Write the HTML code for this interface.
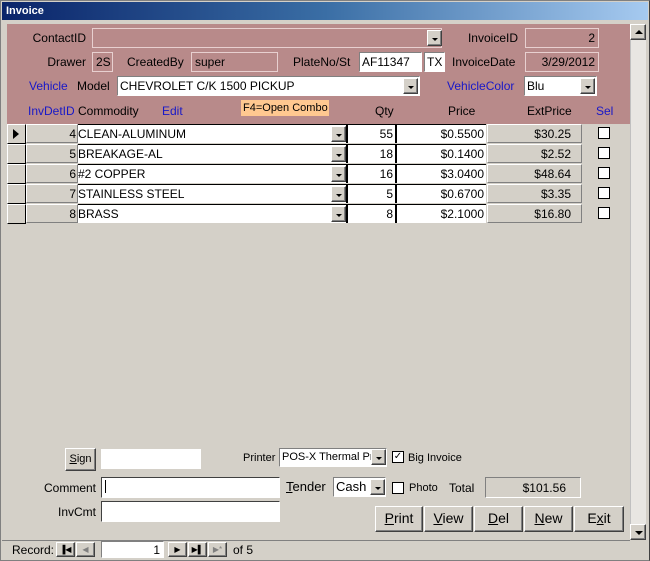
<!DOCTYPE html>
<html><head><meta charset="utf-8"><style>
*{box-sizing:border-box;margin:0;padding:0}
body{width:650px;height:561px;overflow:hidden;background:#d4d0c8;font-family:"Liberation Sans",Tahoma,sans-serif;font-size:12px;color:#000;position:relative}
.a{position:absolute}
.win{left:0;top:0;width:650px;height:561px;border:1px solid #808080;border-right-color:#404040;background:#d4d0c8}
.title{left:2px;top:2px;width:646px;height:18px;background:linear-gradient(90deg,#0a246a,#3a6ea5 50%,#a6caf0);color:#fff;font-weight:bold;font-size:11px;padding:3px 0 0 4px}
.hdr{left:7px;top:24px;width:623px;height:100px;background:#b88a8a}
.lbl{white-space:nowrap;line-height:14px}
.r{text-align:right}
.blue{color:#1818c8}
.pbox{border:1px solid #e8d0d0;background:#b88a8a;padding:2px 3px;line-height:14px;white-space:nowrap;overflow:hidden}
.wbox{background:#fff;border:1px solid;border-color:#808080 #fff #fff #808080;padding:2px 2px;line-height:14px;white-space:nowrap;overflow:hidden}
.btn{background:#d4d0c8;border:1px solid;border-color:#fff #404040 #404040 #fff;box-shadow:inset -1px -1px 0 #808080}
.dd{width:15px;height:16px}
.dd:after{content:"";position:absolute;left:4px;top:7px;border:3px solid transparent;border-top:3px solid #000;border-bottom:0}
.cell{height:19px;line-height:17px;padding:1px 2px;white-space:nowrap;overflow:hidden}
.g{background:#d4d0c8;border:1px solid;border-color:#fff #808080 #808080 #fff}
.w{background:#fff;border-right:2px solid #000}
.cb{width:12px;height:12px;background:#fff;border:1px solid #000}
.sb{left:630px;top:24px;width:16px;height:516px;background:#e8e6e2;border-left:1px solid #c0c0c0}
.bb{font-size:14px;text-align:center;line-height:22px}
u{text-decoration:underline}
</style></head><body>
<div class="a win"></div>
<div class="a title">Invoice</div>
<div class="a hdr"></div>
<!-- row1 -->
<div class="a lbl r" style="left:20px;top:31px;width:66px">ContactID</div>
<div class="a pbox" style="left:92px;top:28px;width:350px;height:20px"></div>
<div class="a btn dd" style="left:427px;top:30px"></div>
<div class="a lbl r" style="left:450px;top:31px;width:68px">InvoiceID</div>
<div class="a pbox r" style="left:525px;top:28px;width:74px;height:20px">2</div>
<!-- row2 -->
<div class="a lbl r" style="left:30px;top:55px;width:56px">Drawer</div>
<div class="a pbox" style="left:92px;top:52px;width:21px;height:20px">2S</div>
<div class="a lbl" style="left:127px;top:55px">CreatedBy</div>
<div class="a pbox" style="left:191px;top:52px;width:87px;height:20px">super</div>
<div class="a lbl" style="left:293px;top:55px">PlateNo/St</div>
<div class="a wbox" style="left:359px;top:52px;width:63px;height:20px">AF11347</div>
<div class="a wbox" style="left:424px;top:52px;width:21px;height:20px">TX</div>
<div class="a lbl" style="left:452px;top:55px">InvoiceDate</div>
<div class="a pbox r" style="left:525px;top:52px;width:74px;height:20px">3/29/2012</div>
<!-- row3 -->
<div class="a lbl blue" style="left:29px;top:79px">Vehicle</div>
<div class="a lbl" style="left:77px;top:79px">Model</div>
<div class="a wbox" style="left:117px;top:76px;width:303px;height:20px">CHEVROLET C/K 1500 PICKUP</div>
<div class="a btn dd" style="left:403px;top:78px"></div>
<div class="a lbl blue" style="left:447px;top:79px">VehicleColor</div>
<div class="a wbox" style="left:524px;top:76px;width:73px;height:20px">Blu</div>
<div class="a btn dd" style="left:580px;top:78px"></div>
<!-- col labels -->
<div class="a lbl blue" style="left:28px;top:104px">InvDetID</div>
<div class="a lbl" style="left:78px;top:104px">Commodity</div>
<div class="a lbl blue" style="left:162px;top:104px">Edit</div>
<div class="a lbl" style="left:241px;top:100px;width:88px;height:16px;background:#ffc890;padding:1px 2px;font-size:11px">F4=Open Combo</div>
<div class="a lbl" style="left:375px;top:104px">Qty</div>
<div class="a lbl" style="left:448px;top:104px">Price</div>
<div class="a lbl" style="left:527px;top:104px">ExtPrice</div>
<div class="a lbl blue" style="left:596px;top:104px">Sel</div>
<!-- rows -->
<div id="rows"></div>
<script>
var d=[["4","CLEAN-ALUMINUM","55","$0.5500","$30.25"],["5","BREAKAGE-AL","18","$0.1400","$2.52"],["6"," #2 COPPER","16","$3.0400","$48.64"],["7","STAINLESS STEEL","5","$0.6700","$3.35"],["8","BRASS","8","$2.1000","$16.80"]];
var h="";
for(var i=0;i<5;i++){var y=124+i*20,r=d[i];
h+='<div class="a g" style="left:7px;top:'+y+'px;width:19px;height:20px;border-color:#fff #000 #000 #fff"></div>';
if(i==0)h+='<div class="a" style="left:13px;top:'+(y+5)+'px;border:5px solid transparent;border-left:6px solid #000;border-right:0"></div>';
h+='<div class="a cell g r" style="left:26px;top:'+y+'px;width:52px;padding-right:1px">'+r[0]+'</div>';
h+='<div class="a cell w" style="left:78px;top:'+y+'px;width:270px;border-top:1px solid #000;padding-left:0">'+r[1]+'</div>';
h+='<div class="a btn dd" style="left:331px;top:'+(y+2)+'px"></div>';
h+='<div class="a cell w r" style="left:348px;top:'+y+'px;width:49px;border-top:1px solid #000">'+r[2]+'</div>';
h+='<div class="a cell r" style="left:397px;top:'+y+'px;width:89px;background:#fff;border-top:1px solid #000">'+r[3]+'</div>';
h+='<div class="a cell g r" style="left:487px;top:'+y+'px;width:95px;padding-right:10px">'+r[4]+'</div>';
h+='<div class="a cb" style="left:598px;top:'+(y+3)+'px"></div>';}
document.getElementById("rows").innerHTML=h;
</script>
<!-- scrollbar -->
<div class="a sb"></div>
<div class="a btn" style="left:630px;top:24px;width:16px;height:16px"><div class="a" style="left:4px;top:5px;border:4px solid transparent;border-bottom:4px solid #000;border-top:0"></div></div>
<div class="a btn" style="left:630px;top:524px;width:16px;height:16px"><div class="a" style="left:4px;top:6px;border:4px solid transparent;border-top:4px solid #000;border-bottom:0"></div></div>
<!-- bottom -->
<div class="a btn" style="left:65px;top:448px;width:31px;height:23px;text-align:center;line-height:20px;font-size:11px"><u>S</u>ign</div>
<div class="a" style="left:101px;top:449px;width:100px;height:20px;background:#fff"></div>
<div class="a lbl" style="left:243px;top:451px;font-size:11px">Printer</div>
<div class="a wbox" style="left:279px;top:448px;width:108px;height:19px;padding:1px 2px;font-size:11px">POS-X Thermal Pri</div>
<div class="a btn dd" style="left:371px;top:449px"></div>
<div class="a cb" style="left:392px;top:451px;font-size:10px;line-height:9px;text-align:center">✓</div>
<div class="a lbl" style="left:408px;top:451px;font-size:11px">Big Invoice</div>
<div class="a lbl r" style="left:30px;top:481px;width:66px">Comment</div>
<div class="a wbox" style="left:101px;top:477px;width:179px;height:21px;border-color:#404040 #fff #fff #404040"><span style="display:inline-block;width:1px;height:13px;background:#000;margin-left:1px"></span></div>
<div class="a lbl" style="left:286px;top:480px;font-size:13px"><u>T</u>ender</div>
<div class="a wbox" style="left:333px;top:477px;width:53px;height:20px;font-size:13px">Cash</div>
<div class="a btn dd" style="left:370px;top:479px"></div>
<div class="a cb" style="left:392px;top:482px"></div>
<div class="a lbl" style="left:409px;top:481px;font-size:11px">Photo</div>
<div class="a lbl" style="left:449px;top:481px">Total</div>
<div class="a g r" style="left:485px;top:477px;width:96px;height:21px;padding:3px 14px 0 0;border-color:#808080 #fff #fff #808080">$101.56</div>
<div class="a lbl r" style="left:40px;top:505px;width:56px">InvCmt</div>
<div class="a wbox" style="left:101px;top:501px;width:179px;height:21px;border-color:#404040 #fff #fff #404040"></div>
<div class="a btn bb" style="left:375px;top:506px;width:48px;height:26px"><u>P</u>rint</div>
<div class="a btn bb" style="left:424px;top:506px;width:49px;height:26px"><u>V</u>iew</div>
<div class="a btn bb" style="left:474px;top:506px;width:49px;height:26px"><u>D</u>el</div>
<div class="a btn bb" style="left:524px;top:506px;width:49px;height:26px"><u>N</u>ew</div>
<div class="a btn bb" style="left:574px;top:506px;width:50px;height:26px">E<u>x</u>it</div>
<!-- record bar -->
<div class="a" style="left:2px;top:540px;width:628px;height:1px;background:#808080"></div>
<div class="a lbl" style="left:12px;top:543px">Record:</div>
<div class="a btn" style="left:56px;top:542px;width:19px;height:15px;font-size:8px;text-align:center;line-height:13px">▐◀</div>
<div class="a btn" style="left:76px;top:542px;width:19px;height:15px;font-size:8px;text-align:center;line-height:13px;color:#808080">◀</div>
<div class="a wbox r" style="left:101px;top:541px;width:63px;height:17px;padding:1px 3px">1</div>
<div class="a btn" style="left:168px;top:542px;width:19px;height:15px;font-size:8px;text-align:center;line-height:13px">▶</div>
<div class="a btn" style="left:188px;top:542px;width:19px;height:15px;font-size:8px;text-align:center;line-height:13px">▶▌</div>
<div class="a btn" style="left:208px;top:542px;width:19px;height:15px;font-size:8px;text-align:center;line-height:13px;color:#808080">▶*</div>
<div class="a lbl" style="left:233px;top:543px">of 5</div>
</body></html>
